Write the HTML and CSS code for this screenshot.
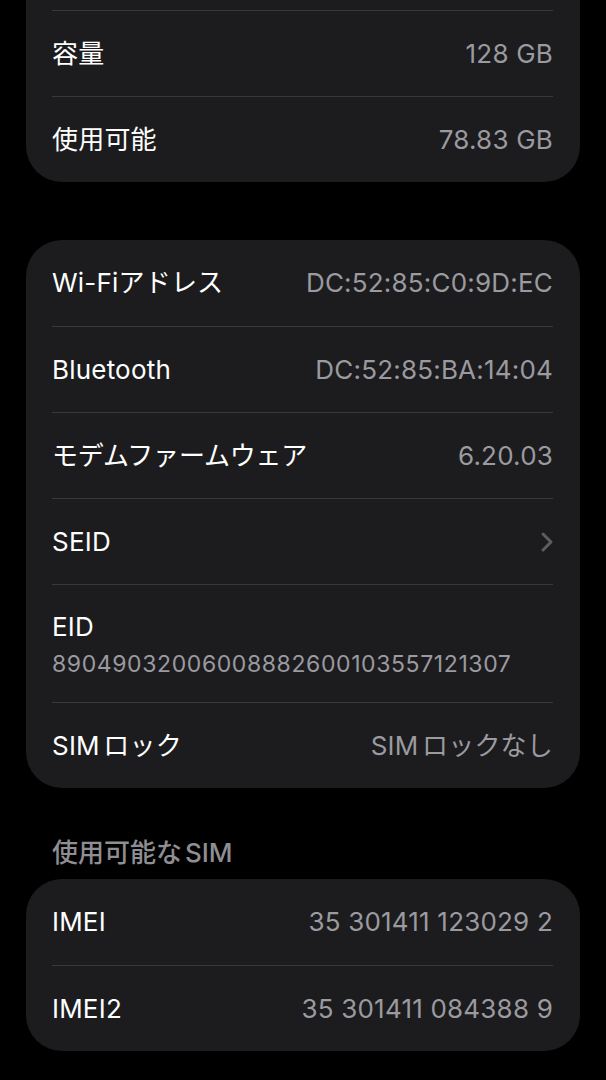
FILE: index.html
```html
<!DOCTYPE html>
<html>
<head>
    <title>情報</title>
    <meta charset="utf-8">
    <link rel="stylesheet" href="styles.css">
</head>
<body>
    <div class="screen">
        <div class="group group-first">
            <!-- row above scrolled out of view -->
            <div class="row"></div>
            <div class="row">
                <span class="label">容量</span>
                <span class="value">128 GB</span>
            </div>
            <div class="row">
                <span class="label">使用可能</span>
                <span class="value">78.83 GB</span>
            </div>
        </div>

        <div class="group">
            <div class="row">
                <span class="label">Wi-Fiアドレス</span>
                <span class="value">DC:52:85:C0:9D:EC</span>
            </div>
            <div class="row">
                <span class="label">Bluetooth</span>
                <span class="value">DC:52:85:BA:14:04</span>
            </div>
            <div class="row">
                <span class="label label-kana">モデムファームウェア</span>
                <span class="value">6.20.03</span>
            </div>
            <div class="row">
                <span class="label">SEID</span>
                <svg class="chevron" width="14" height="22" viewBox="0 0 14 22">
                    <polyline points="3,3 11,11 3,19" fill="none" stroke="#5c5c61" stroke-width="3" stroke-linecap="round" stroke-linejoin="round"/>
                </svg>
            </div>
            <div class="row row-stacked">
                <span class="label">EID</span>
                <span class="sub-value">89049032006008882600103557121307</span>
            </div>
            <div class="row">
                <span class="label">SIM ロック</span>
                <span class="value value-tight">SIM ロックなし</span>
            </div>
        </div>

        <p class="section-title">使用可能な SIM</p>

        <div class="group">
            <div class="row">
                <span class="label">IMEI</span>
                <span class="value">35 301411 123029 2</span>
            </div>
            <div class="row">
                <span class="label">IMEI2</span>
                <span class="value">35 301411 084388 9</span>
            </div>
        </div>
    </div>
</body>
</html>
```

FILE: styles.css
```css
body {
    margin: 0;
    padding: 0;
    background-color: #000;
    font-family: Inter, "Noto Sans CJK JP", sans-serif;
    color: #fff;
}

.screen {
    width: 606px;
    height: 1080px;
    overflow: hidden;
}

.group {
    margin: 0 26px;
    padding: 0 27px 0 26px;
    background-color: #1c1c1e;
    border-radius: 36px;
}

.group-first {
    margin-top: -76px;
    margin-bottom: 58px;
}

.row {
    height: 86px;
    box-sizing: border-box;
    display: flex;
    align-items: center;
    justify-content: space-between;
}

.row + .row {
    border-top: 1px solid #38383b;
}

.label {
    font-size: 26px;
    line-height: 32px;
    letter-spacing: 0.2px;
    word-spacing: -4px;
}

.label-kana {
    letter-spacing: -0.2px;
}

.value {
    font-size: 26px;
    line-height: 32px;
    letter-spacing: 0.2px;
    color: #9a9aa0;
}

.value-tight {
    word-spacing: -4px;
}

.chevron {
    display: block;
    margin-right: -1px;
}

.row-stacked {
    height: 118px;
    flex-direction: column;
    align-items: flex-start;
    justify-content: flex-start;
    padding: 26px 0 24px;
}

.sub-value {
    margin-top: 7px;
    font-size: 23px;
    line-height: 28px;
    letter-spacing: 0.6px;
    color: #9a9aa0;
}

.section-title {
    margin: 50px 26px 11px;
    padding: 0 26px;
    font-size: 26px;
    line-height: 30px;
    font-weight: 500;
    word-spacing: -4px;
    color: #8e8e93;
}
```
